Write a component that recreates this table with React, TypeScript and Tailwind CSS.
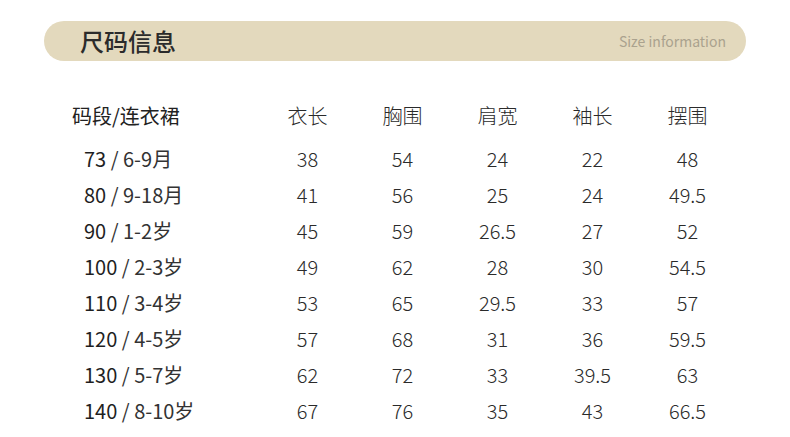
const cols = ["衣长", "胸围", "肩宽", "袖长", "摆围"];

const rows = [
  { size: "73", age: "6-9月", vals: ["38", "54", "24", "22", "48"] },
  { size: "80", age: "9-18月", vals: ["41", "56", "25", "24", "49.5"] },
  { size: "90", age: "1-2岁", vals: ["45", "59", "26.5", "27", "52"] },
  { size: "100", age: "2-3岁", vals: ["49", "62", "28", "30", "54.5"] },
  { size: "110", age: "3-4岁", vals: ["53", "65", "29.5", "33", "57"] },
  { size: "120", age: "4-5岁", vals: ["57", "68", "31", "36", "59.5"] },
  { size: "130", age: "5-7岁", vals: ["62", "72", "33", "39.5", "63"] },
  { size: "140", age: "8-10岁", vals: ["67", "76", "35", "43", "66.5"] },
];

const App = () => {
  return (
    <div
      className="w-[790px] h-[437px] bg-white text-[#333333] overflow-hidden"
      style={{ fontFamily: '"Noto Sans CJK SC", "Noto Sans", sans-serif' }}
    >
      <div className="pt-[21px] px-[44px]">
        <div className="h-[40px] rounded-full bg-[#e3d9bd] flex items-center justify-between pl-[36px] pr-[20px]">
          <h2 className="text-[24px] font-medium text-[#2b2b2b] leading-none">尺码信息</h2>
          <span className="text-[14px] text-[#aaa28e] leading-none">Size information</span>
        </div>
      </div>

      <div className="mt-[37px] pl-[72px]">
        <div className="flex h-[36px] items-center text-[20px]">
          <div className="w-[188px] text-[#222222]">码段/连衣裙</div>
          {cols.map((c) => (
            <div key={c} className="w-[95px] text-center font-light text-[#2a2a2a]">
              {c}
            </div>
          ))}
        </div>
        <div className="mt-[7px]">
          {rows.map((r) => (
            <div key={r.size} className="flex h-[36px] items-center text-[20px]">
              <div className="w-[188px] pl-[12px] text-[#333333]">
                <span className="text-[#1f1f1f]">{r.size}</span> / {r.age}
              </div>
              {r.vals.map((v, i) => (
                <div key={i} className="w-[95px] text-center font-light text-[#2a2a2a]">
                  {v}
                </div>
              ))}
            </div>
          ))}
        </div>
      </div>
    </div>
  );
};

export default App;
